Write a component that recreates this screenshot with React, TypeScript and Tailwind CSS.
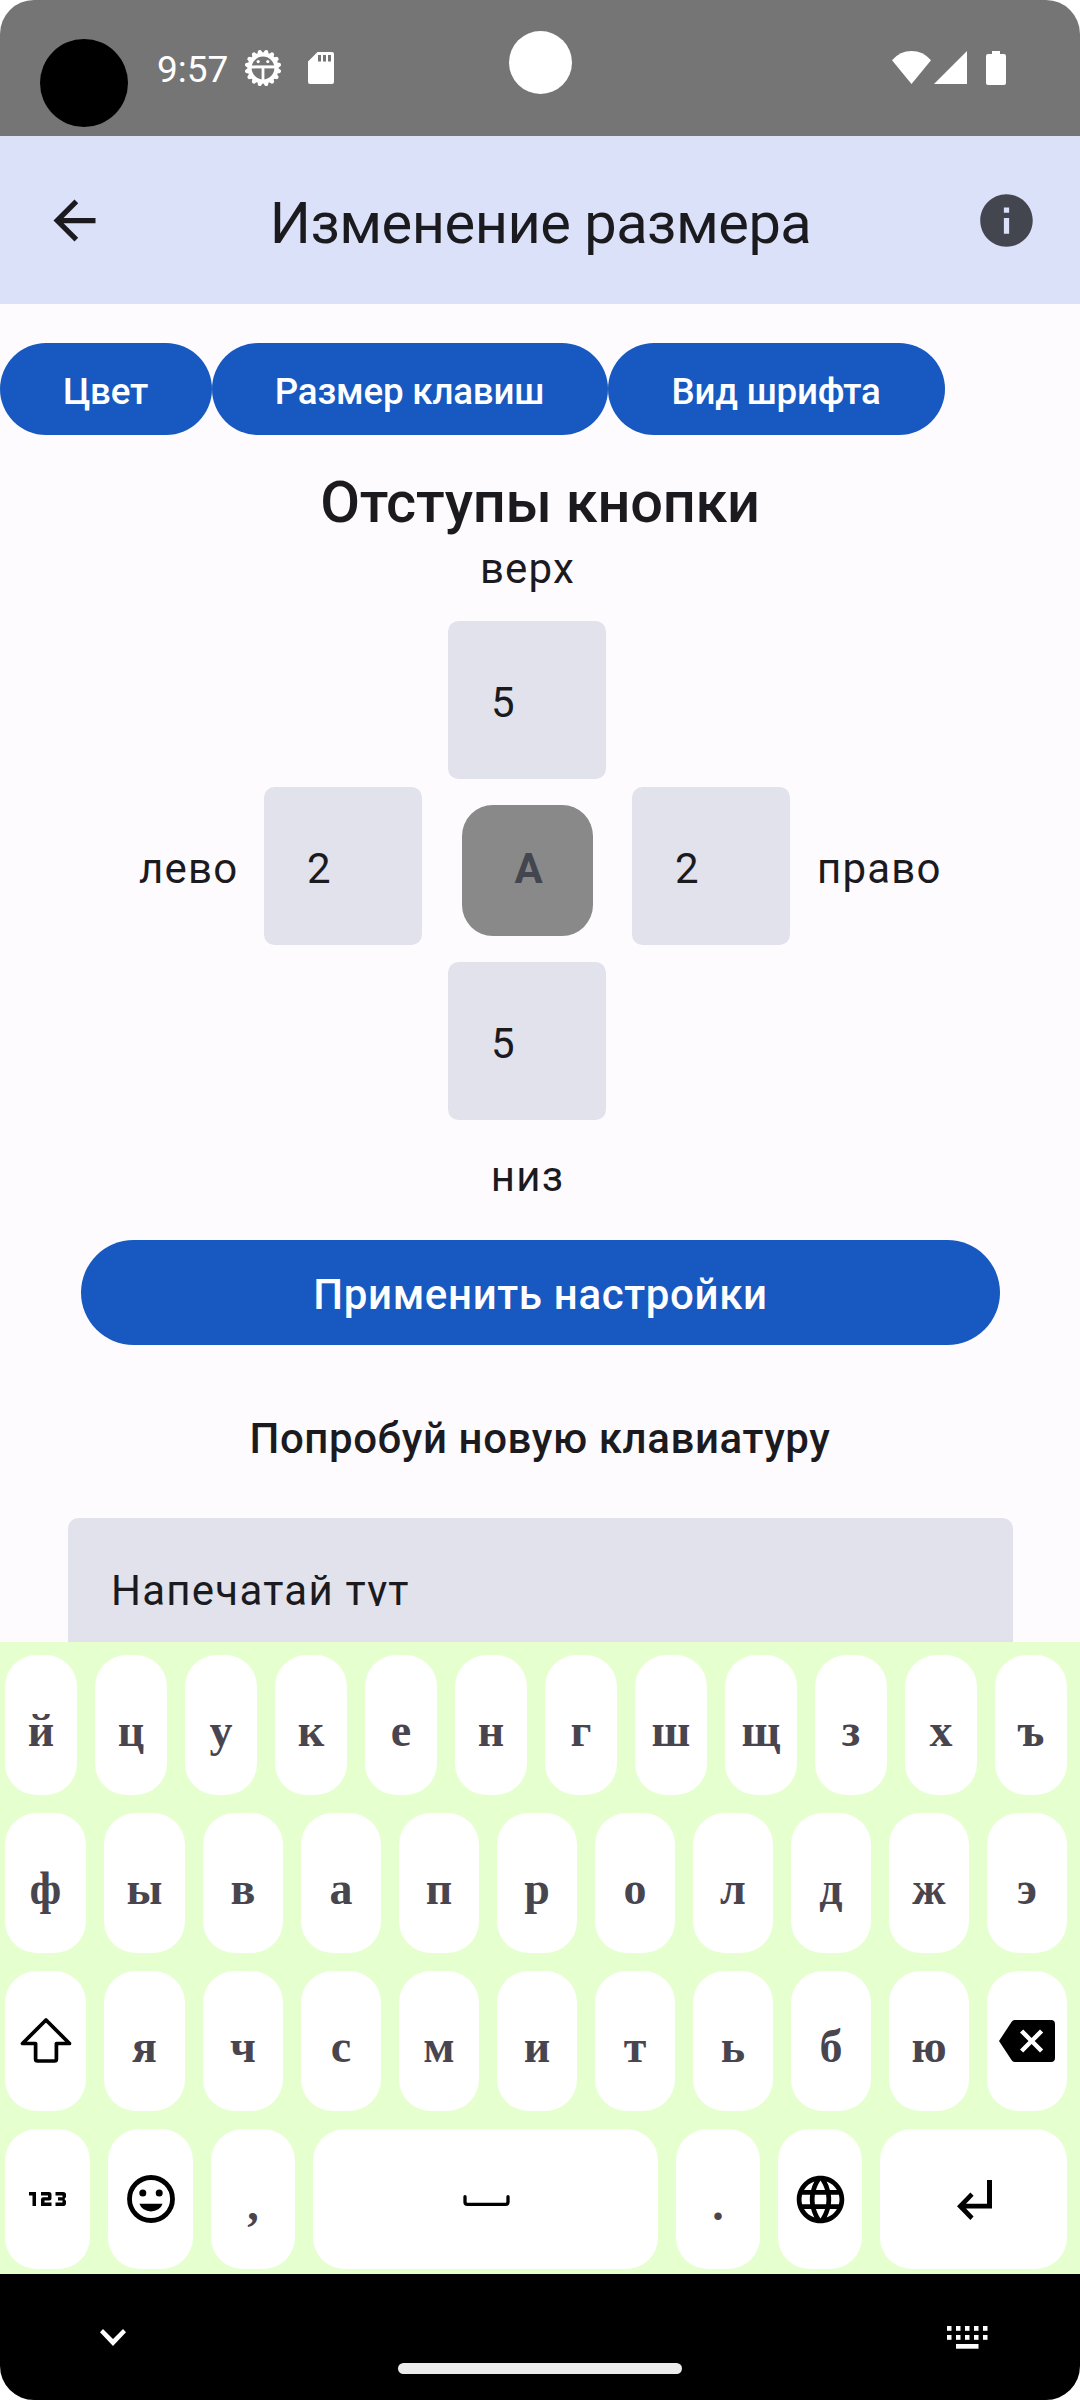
import React from "react";

const SERIF = "font-['Liberation_Serif',serif]";

function Svg({ w, h, vb, className = "", children }: { w: number; h: number; vb: string; className?: string; children: React.ReactNode }) {
  return (
    <svg width={w} height={h} viewBox={vb} fill="currentColor" className={"block shrink-0 " + className}>
      {children}
    </svg>
  );
}

/* Debug-mode gear with the droid's head in it */
function GearIcon() {
  const teeth = Array.from({ length: 16 }, (_, i) => i * 22.5 + 11.25);
  return (
    <Svg w={38} h={38} vb="-19 -19 38 38">
      {teeth.map((a) => (
        <path key={a} d="M-3.2 -14L-1.500 -17.800Q0 -19 1.500 -17.800L3.200 -14Z" transform={`rotate(${a})`} />
      ))}
      <circle r="13.400" fill="none" stroke="currentColor" strokeWidth="4" />
      <path d="M-13 -2.600H13V0.400H-13Z" />
      <path d="M-1.400 0H1.400V13H-1.400Z" />
      <circle cx="-4.800" cy="-6.400" r="1.600" />
      <circle cx="4.800" cy="-6.400" r="1.600" />
    </Svg>
  );
}

function StatusBar() {
  return (
    <header className="relative flex h-[136px] shrink-0 bg-[#757575] text-white">
      <div className="ml-10 mt-[39px] size-[88px] shrink-0 rounded-full bg-black" />
      <div className="ml-[29px] mt-[48px] w-[87px] text-[37px] leading-[43px]">9:57</div>
      <div className="mt-[49px]"><GearIcon /></div>
      <div className="ml-[26px] mt-[52px]">
        <Svg w={26} h={32} vb="0 0 26 32">
          <path fillRule="evenodd" d="M9.5 0H24Q26 0 26 2V30Q26 32 24 32H2Q0 32 0 30V9.500ZM10 3V9.500H13V3ZM15 3V9.500H18V3ZM20 3V9.500H23V3Z" />
        </Svg>
      </div>
      <div className="absolute left-[509px] top-[31px] size-[63px] rounded-full bg-white" />
      <div className="ml-auto mr-[74px] mt-[51px] flex">
        <Svg w={39} h={33} vb="0 0 39 33"><path d="M19.500 33L0 9.200Q8 0 19.500 0T39 9.200Z" /></Svg>
        <Svg w={33} h={33} vb="0 0 33 33" className="ml-[3px]"><path d="M33 0V33H0Z" /></Svg>
        <Svg w={20} h={34} vb="0 0 20 34" className="ml-[19px]">
          <path d="M6 0H14V3H18Q20 3 20 5V32Q20 34 18 34H2Q0 34 0 32V5Q0 3 2 3H6Z" />
        </Svg>
      </div>
    </header>
  );
}

function AppBar() {
  return (
    <div className="flex h-[168px] shrink-0 items-center justify-between bg-[#dce1fa] pl-[43px] pr-[42px]">
      <Svg w={63} h={63} vb="0 0 24 24" className="text-[#1b1b1f]">
        <path d="M20 11H7.830l5.590-5.590L12 4l-8 8 8 8 1.410-1.410L7.830 13H20v-2z" />
      </Svg>
      <h1 className="mt-[5px] text-[57.750px] leading-[74px] tracking-[-0.5px] text-[#1b1b1f]">Изменение размера</h1>
      <Svg w={63} h={63} vb="0 0 24 24" className="text-[#44464f]">
        <path d="M12 2C6.480 2 2 6.480 2 12s4.480 10 10 10 10-4.480 10-10S17.520 2 12 2zm1 15h-2v-6h2v6zm0-8h-2V7h2v2z" />
      </Svg>
    </div>
  );
}

function Field({ value }: { value: string }) {
  return (
    <div className="flex size-[158px] items-center rounded-[10.500px] bg-[#e2e2ec] pl-[43px] pt-[5px] text-[42px] leading-[63px] tracking-[1.3px]">
      {value}
    </div>
  );
}

function PaddingEditor() {
  const label = "text-[42px] leading-[63px] tracking-[1.2px]";
  return (
    <section className="flex flex-col items-center pr-[26px] text-[#1b1b1f]">
      <div className={label + " h-[84px] pl-[1px]"}>верх</div>
      <Field value="5" />
      <div className="mt-2 flex h-[158px] items-center">
        <div className={label + " w-[125px] pt-[5px]"}>лево</div>
        <Field value="2" />
        <div className="ml-10 mr-[39px] mt-[9px] flex size-[131px] items-center justify-center rounded-[31px] bg-[#898989] pb-[4px] pl-[2px] text-[42px] font-bold leading-[56px] text-[#44464f]">A</div>
        <Field value="2" />
        <div className={label + " w-[125px] pl-[27px] pt-[5px]"}>право</div>
      </div>
      <div className="mt-[17px]"><Field value="5" /></div>
      <div className={label + " mt-[25px] pl-[1px]"}>низ</div>
    </section>
  );
}

function Chip({ text, w }: { text: string; w: string }) {
  return (
    <button className={"flex h-[92px] items-center justify-center rounded-full bg-[#1759c1] pr-[1px] pt-[5px] text-[36.750px] font-medium tracking-[-0.2px] text-white " + w}>
      {text}
    </button>
  );
}

function Key({ w, children, text = false }: { w: string; children: React.ReactNode; text?: boolean }) {
  return (
    <div className={"h-[158px] shrink-0 pb-[18px] pl-[5px] pr-[13px] " + w}>
      <div className={"flex h-[140px] items-center justify-center rounded-[31.500px] bg-white " + (text ? "pt-[12px] text-[46px] font-bold leading-[56px] text-[#49454f] " + SERIF : "text-black")}>
        {children}
      </div>
    </div>
  );
}

function LetterKeys({ letters, w }: { letters: string; w: string }) {
  return (
    <>
      {letters.split("").map((l) => (
        <Key key={l} w={w} text>{l}</Key>
      ))}
    </>
  );
}

function Keyboard() {
  return (
    <section className="h-[632px] shrink-0 overflow-hidden bg-[#e5ffce] pt-[13px]">
      <div className="flex"><LetterKeys letters="йцукенгшщзхъ" w="w-[90px]" /></div>
      <div className="flex">
        <LetterKeys letters="фы" w="w-[99px]" />
        <LetterKeys letters="вапролджэ" w="w-[98px]" />
      </div>
      <div className="flex">
        <Key w="w-[99px]">
          <Svg w={52} h={45} vb="0 0 52 45" className="mb-[2px]">
            <path d="M26 2L2.500 25.500H15.600V41Q15.600 43 17.600 43H34.400Q36.400 43 36.400 41V25.500H49.500Z" fill="none" stroke="currentColor" strokeWidth="3.700" strokeLinejoin="round" />
          </Svg>
        </Key>
        <LetterKeys letters="я" w="w-[99px]" />
        <LetterKeys letters="чсмитьбю" w="w-[98px]" />
        <Key w="w-[98px]">
          <Svg w={56} h={42} vb="0 0 56 42">
            <path fillRule="evenodd" d="M15.500 0H52Q56 0 56 4V38Q56 42 52 42H15.500Q13.800 42 12.500 40L0 21L12.500 2Q13.800 0 15.500 0ZM21 12.600L29.500 21L21 29.400L24.200 32.600L32.600 24.100L41 32.600L44.200 29.400L35.700 21L44.200 12.600L41 9.400L32.600 17.900L24.200 9.400Z" />
          </Svg>
        </Key>
      </div>
      <div className="flex">
        <Key w="w-[103px]">
          <Svg w={37} h={14} vb="0 0 37 14">
            <path d="M0 0H7V14H3.500V3.500H0ZM12 0H20Q22.500 0 22.500 2.500V6Q22.500 8.500 20 8.500H15.500V10.500H22.500V14H12V7.500Q12 5.300 14.500 5.300H19V3.500H12ZM26.500 0H34Q37 0 37 2.800V5L35.500 7L37 9V11.200Q37 14 34 14H26.500V10.500H33.500V8.500H29V5.300H33.500V3.500H26.500Z" />
          </Svg>
        </Key>
        <Key w="w-[103px]">
          <Svg w={48} h={48} vb="0 0 48 48">
            <circle cx="24" cy="24" r="21.500" fill="none" stroke="currentColor" strokeWidth="4.800" />
            <circle cx="15.800" cy="18" r="3.500" />
            <circle cx="32.200" cy="18" r="3.500" />
            <path d="M12.400 28.800H35.600A12 10.200 0 0 1 12.400 28.800Z" />
          </Svg>
        </Key>
        <Key w="w-[102px]" text>,</Key>
        <Key w="w-[363px]">
          <Svg w={47} h={11} vb="0 0 47 11" className="ml-[1px] mt-[3px]">
            <path d="M2 1.700V7Q2 9.300 4.300 9.300H42.700Q45 9.300 45 7V1.700" fill="none" stroke="currentColor" strokeWidth="3.300" strokeLinecap="round" />
          </Svg>
        </Key>
        <Key w="w-[102px]" text>.</Key>
        <Key w="w-[102px]">
          <Svg w={57} h={57} vb="0 0 24 24">
            <path d="M11.990 2C6.470 2 2 6.480 2 12s4.470 10 9.990 10C17.520 22 22 17.520 22 12S17.520 2 11.990 2zm6.930 6h-2.950c-.32-1.250-.78-2.450-1.380-3.560 1.840.63 3.370 1.910 4.330 3.560zM12 4.040c.83 1.200 1.480 2.530 1.910 3.960h-3.820c.43-1.430 1.080-2.760 1.910-3.960zM4.260 14C4.100 13.360 4 12.690 4 12s.1-1.360.26-2h3.380c-.08.66-.14 1.320-.14 2 0 .68.06 1.340.14 2H4.260zm.82 2h2.950c.32 1.250.78 2.450 1.380 3.560-1.840-.63-3.370-1.900-4.330-3.560zm2.950-8H5.080c.96-1.660 2.490-2.930 4.330-3.560C8.810 5.550 8.350 6.750 8.030 8zM12 19.960c-.83-1.200-1.480-2.530-1.910-3.960h3.820c-.43 1.430-1.080 2.760-1.910 3.960zM14.340 14H9.660c-.09-.66-.16-1.320-.16-2 0-.68.07-1.350.16-2h4.680c.09.65.16 1.320.16 2 0 .68-.07 1.340-.16 2zm.25 5.560c.6-1.110 1.060-2.310 1.380-3.560h2.950c-.96 1.650-2.490 2.930-4.330 3.560zM16.360 14c.08-.66.14-1.320.14-2 0-.68-.06-1.340-.14-2h3.380c.16.64.26 1.310.26 2s-.1 1.360-.26 2h-3.380z" />
          </Svg>
        </Key>
        <Key w="w-[205px]">
          <Svg w={35} h={40} vb="0 0 35 40" className="ml-[2px] mt-[1px]">
            <path d="M30 0H35V28.500H9L16.600 36.500L13.400 40L0 26.300L13.400 12.500L16.600 15.800L9 23.700H30Z" />
          </Svg>
        </Key>
      </div>
    </section>
  );
}

function NavBar() {
  const cols = [0, 9, 18, 27, 36];
  return (
    <footer className="flex h-[126px] shrink-0 justify-between bg-black pl-[100px] pr-[92px] text-white">
      <Svg w={26} h={17} vb="0 0 26 17" className="mt-[55px]">
        <path d="M0 3.200L3 0L13 10L23 0L26 3.200L13 17Z" />
      </Svg>
      <div className="ml-[6px] mt-[89px] h-[11px] w-[284px] rounded-full bg-[#ececec]" />
      <Svg w={41} h={23} vb="0 0 41 23" className="mt-[52px]">
        {cols.map((x) => (
          <React.Fragment key={x}>
            <rect x={x} y="0" width="4.500" height="4.800" />
            <rect x={x} y="9" width="4.500" height="4.800" />
          </React.Fragment>
        ))}
        <rect x="9" y="18" width="22.500" height="4.700" />
      </Svg>
    </footer>
  );
}

export default function App() {
  return (
    <div className="h-[2400px] w-[1080px] bg-white font-[Roboto,sans-serif]">
      <div className="flex h-full flex-col overflow-hidden rounded-[34px] bg-[#fefbff]">
        <StatusBar />
        <AppBar />
        <main className="h-[1338px] shrink-0 overflow-hidden pt-[39px] text-[#1b1b1f]">
          <div className="flex">
            <Chip text="Цвет" w="w-[212px]" />
            <Chip text="Размер клавиш" w="w-[396px]" />
            <Chip text="Вид шрифта" w="w-[337px]" />
          </div>
          <h2 className="mt-[30px] h-[72px] text-center text-[57.750px] font-medium leading-[74px] tracking-[-0.25px]">Отступы кнопки</h2>
          <PaddingEditor />
          <button className="ml-[81px] mt-[32px] flex h-[105px] w-[919px] items-center justify-center rounded-full bg-[#1759c1] pt-[3px] text-[42px] font-medium tracking-[0.66px] text-white">
            Применить настройки
          </button>
          <h3 className="mt-[62px] h-[111px] text-center text-[42px] font-medium leading-[63px] tracking-[0.6px]">Попробуй новую клавиатуру</h3>
          <div className="ml-[68px] h-[140px] w-[945px] rounded-t-[10.500px] bg-[#e2e2ec] pl-[43px] pt-[41px]">
            <div className="h-[47px] overflow-hidden text-[42px] leading-[63px] tracking-[1.25px]">Напечатай тут</div>
          </div>
        </main>
        <Keyboard />
        <NavBar />
      </div>
    </div>
  );
}
